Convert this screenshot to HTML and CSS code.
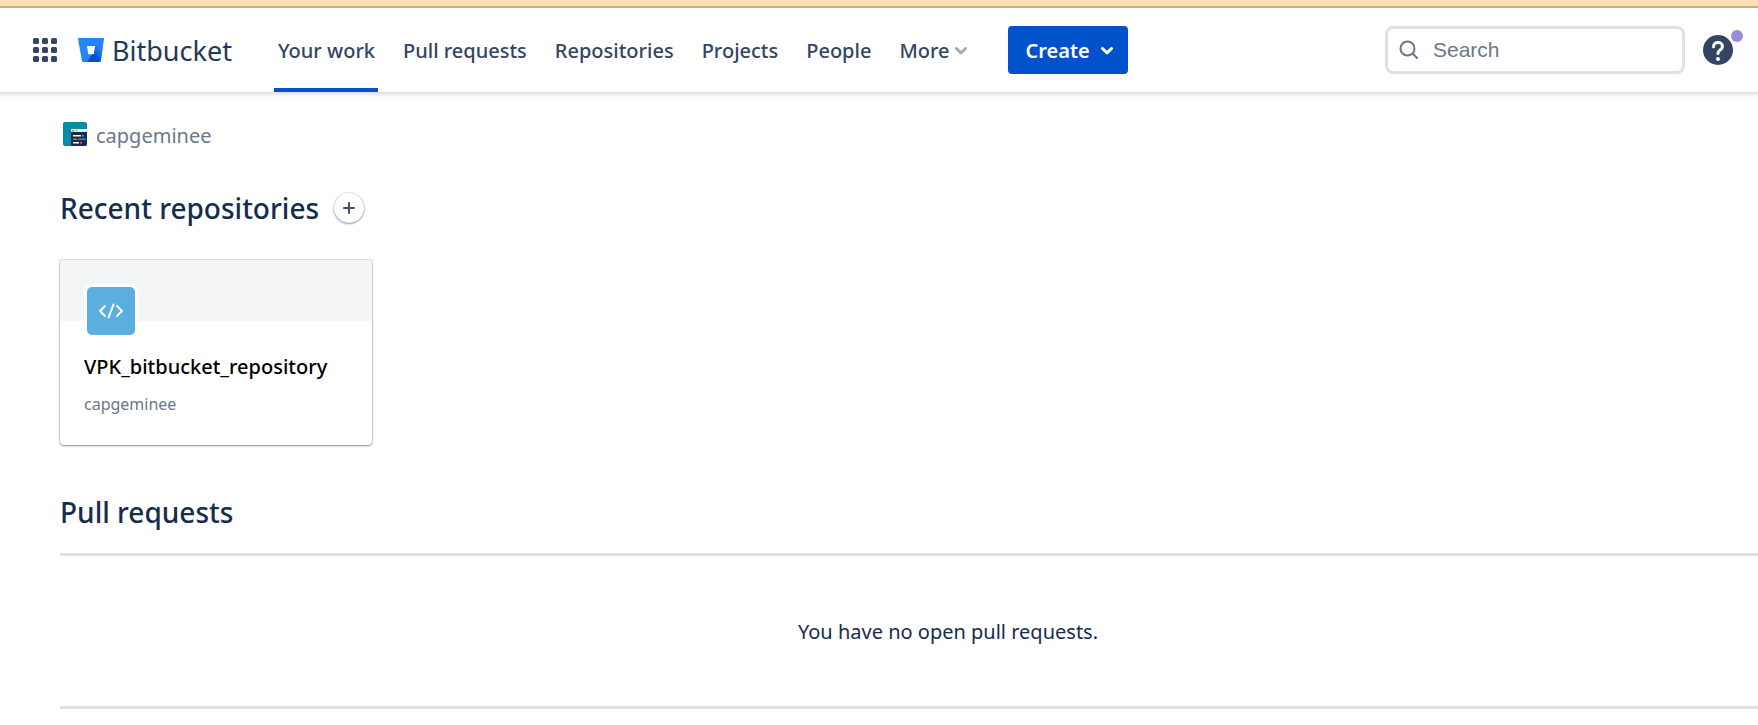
FILE: index.html
```html
<!DOCTYPE html>
<html lang="en">
<head>
<meta charset="utf-8">
<meta name="viewport" content="width=device-width, initial-scale=1">
<title>Your work – Bitbucket</title>
<link rel="stylesheet" href="styles.css">
</head>
<body>
<div class="notice-strip"></div>
<header class="topbar">
  <button class="icon-button switcher" type="button" aria-label="Switch to another product">
    <svg width="24" height="24" viewBox="0 0 24 24" fill="#344563">
      <rect x="0" y="0" width="6" height="6" rx="1.5"/><rect x="9" y="0" width="6" height="6" rx="1.5"/><rect x="18" y="0" width="6" height="6" rx="1.5"/>
      <rect x="0" y="9" width="6" height="6" rx="1.5"/><rect x="9" y="9" width="6" height="6" rx="1.5"/><rect x="18" y="9" width="6" height="6" rx="1.5"/>
      <rect x="0" y="18" width="6" height="6" rx="1.5"/><rect x="9" y="18" width="6" height="6" rx="1.5"/><rect x="18" y="18" width="6" height="6" rx="1.5"/>
    </svg>
  </button>
  <a class="brand" href="#">
    <svg width="26" height="24" viewBox="0 0 26 24" aria-hidden="true">
      <defs>
        <linearGradient id="bucket-shade" x1="25" y1="9" x2="15" y2="17" gradientUnits="userSpaceOnUse">
          <stop offset="0.15" stop-color="#2684ff"/><stop offset="1" stop-color="#0052cc"/>
        </linearGradient>
      </defs>
      <path fill="#2684ff" fill-rule="evenodd" d="M0.8 0H25.2a.8.8 0 0 1 .8.900L22.700 23.200a1 1 0 0 1-1 .8H5a1 1 0 0 1-1-.8L0 .9A.8.8 0 0 1 .8 0ZM9 8l1.300 8.300h5.700L17.200 8Z"/>
      <path fill="url(#bucket-shade)" d="M24.900 8H17.200L16 16.300h-2L9 23.900H21.700a1 1 0 0 0 1-.8Z"/>
    </svg>
    <span>Bitbucket</span>
  </a>
  <nav class="nav" aria-label="Primary">
    <a class="nav-item nav-item-active" href="#" aria-current="page">Your work</a>
    <a class="nav-item" href="#">Pull requests</a>
    <a class="nav-item" href="#">Repositories</a>
    <a class="nav-item" href="#">Projects</a>
    <a class="nav-item" href="#">People</a>
    <button class="nav-item" type="button">More
      <svg width="12" height="8" viewBox="0 0 12 8" fill="none" stroke="#a5adba" stroke-width="3" stroke-linecap="round" stroke-linejoin="round" aria-hidden="true"><path d="M1.500 1.500 6 5.800l4.500-4.300"/></svg>
    </button>
  </nav>
  <button class="create" type="button">Create
    <svg width="12" height="8" viewBox="0 0 12 8" fill="none" stroke="#fff" stroke-width="3" stroke-linecap="round" stroke-linejoin="round" aria-hidden="true"><path d="M1.500 1.500 6 5.800l4.500-4.300"/></svg>
  </button>
  <label class="search">
    <svg width="20" height="20" viewBox="0 0 20 20" fill="none" stroke="#6b778c" stroke-width="2" stroke-linecap="round" aria-hidden="true"><circle cx="8.500" cy="8.500" r="7"/><path d="m13.800 13.800 4.200 4.200"/></svg>
    <input type="search" placeholder="Search" aria-label="Search">
  </label>
  <button class="icon-button help" type="button" aria-label="Help">
    <svg width="30" height="30" viewBox="0 0 30 30">
      <circle cx="15" cy="15" r="15" fill="#344563"/>
      <path d="M10.500 11.800C10.500 9 12.400 7.500 15 7.500s4.500 1.600 4.500 4c0 3.300-4.500 3.300-4.500 7" fill="none" stroke="#fff" stroke-width="3" stroke-linecap="round"/>
      <circle cx="15" cy="24" r="2" fill="#fff"/>
    </svg>
    <span class="help-dot"></span>
  </button>
</header>
<main class="page">
  <a class="workspace" href="#">
    <svg width="24" height="24" viewBox="0 0 24 24" aria-hidden="true">
      <clipPath id="tile"><rect width="24" height="24" rx="2"/></clipPath>
      <g clip-path="url(#tile)">
        <rect width="24" height="24" fill="#008da6"/>
        <path fill="#172b4d" d="M8 8h16v16H8z"/>
        <path fill="#ebecf0" d="M8 7h16v3H8z"/>
        <path fill="#ff5630" d="M9 8h1.500v1.500H9z"/><path fill="#ffc400" d="M11 8h1.500v1.500H11z"/><path fill="#57d9a3" d="M13 8h1.500v1.500H13z"/>
        <path fill="#fff" d="M10 13h8v1.500h-8zM10 20h6v1.500h-6z"/>
        <path fill="#4c9aff" d="M19 13h2v1.500h-2z"/>
        <path fill="#ff5630" d="M10 16.500h4v1.500h-4zM17 20h2v1.500h-2z"/>
        <path fill="#00a3bf" d="M15 16.500h8v1.500h-8z"/>
      </g>
    </svg>
    <span>capgeminee</span>
  </a>
  <section class="recent">
    <div class="recent-head">
      <h2>Recent repositories</h2>
      <button class="add" type="button" aria-label="Create repository">
        <svg width="12" height="12" viewBox="0 0 12 12" stroke="#42526e" stroke-width="2" stroke-linecap="round"><path d="M6 1v10M1 6h10"/></svg>
      </button>
    </div>
    <a class="card" href="#">
      <span class="card-band"></span>
      <span class="card-body">
        <span class="avatar">
          <svg width="26" height="16" viewBox="0 0 26 16" fill="none" stroke="#fff" stroke-width="2" stroke-linecap="round" stroke-linejoin="round" aria-hidden="true"><path d="M7 3 2 8l5 5M19 3l5 5-5 5M15.500 1.500l-5 13"/></svg>
        </span>
        <span class="card-title">VPK_bitbucket_repository</span>
        <span class="card-owner">capgeminee</span>
      </span>
    </a>
  </section>
  <section class="pulls">
    <h2>Pull requests</h2>
    <p class="empty">You have no open pull requests.</p>
  </section>
</main>
</body>
</html>
```
FILE: styles.css
```css
* {
  box-sizing: border-box;
}

body {
  margin: 0;
  background: #fff;
  color: #172b4d;
  font-family: "Segoe UI", "Noto Sans", "Open Sans", sans-serif;
  font-size: 20px;
  line-height: 28px;
}

a {
  color: inherit;
  text-decoration: none;
}

button {
  border: 0;
  padding: 0;
  background: none;
  color: inherit;
  font: inherit;
  cursor: pointer;
}

svg {
  display: block;
  flex: none;
}

h2 {
  margin: 0;
  font-size: 28px;
  line-height: 36px;
  font-weight: 500;
}

.notice-strip {
  height: 8px;
  background: #ffdeb5;
  border-bottom: 2px solid #c8b38f;
}

.topbar {
  display: flex;
  align-items: center;
  height: 84px;
  padding: 0 25px 0 33px;
  box-shadow: 0 1px 0 #dfe1e6, 0 2px 3px 1px rgba(9, 30, 66, 0.12);
}

.icon-button {
  position: relative;
  flex: none;
}

.brand {
  display: flex;
  align-items: center;
  gap: 8px;
  margin: 0 42px 0 21px;
  color: #253858;
  font-size: 27px;
}

.brand span {
  padding-top: 2px;
}

.nav {
  display: flex;
  align-self: stretch;
  gap: 21px;
}

.nav-item {
  display: flex;
  align-items: center;
  gap: 5px;
  padding: 6px 3px 0 4px;
  border-bottom: 4px solid transparent;
  color: #344563;
  font-weight: 500;
  white-space: nowrap;
}

.nav-item-active {
  border-bottom-color: #0052cc;
}

.create {
  display: flex;
  align-items: center;
  justify-content: space-between;
  width: 120px;
  height: 48px;
  margin-left: 38px;
  padding: 2px 15px 0 18px;
  border-radius: 4px;
  background: #0052cc;
  color: #fff;
  font-weight: 600;
}

.search {
  display: flex;
  align-items: center;
  gap: 14px;
  width: 300px;
  height: 48px;
  margin: 0 18px 0 auto;
  padding: 0 11px;
  border: 3px solid #dfe1e6;
  border-radius: 8px;
}

.search input {
  flex: 1;
  min-width: 0;
  border: 0;
  padding: 0;
  outline: 0;
  background: none;
  color: #172b4d;
  font: 21px "Liberation Sans", Arial, sans-serif;
}

.search input::placeholder {
  color: #6b778c;
  opacity: 1;
}

.help-dot {
  position: absolute;
  top: -5px;
  right: -10px;
  width: 12px;
  height: 12px;
  border-radius: 50%;
  background: #998dd9;
}

.page {
  padding: 28px 0 16px 60px;
}

.workspace {
  display: inline-flex;
  align-items: center;
  gap: 9px;
  padding-left: 3px;
  color: #6b778c;
}

.workspace span {
  margin-bottom: -2px;
  padding-top: 2px;
}

.recent-head {
  display: flex;
  align-items: center;
  gap: 15px;
  margin: 37px 0 34px;
}

.add {
  display: grid;
  place-items: center;
  width: 30px;
  height: 30px;
  border-radius: 50%;
  box-shadow: 0 1px 2px rgba(9, 30, 66, 0.4), 0 0 1px 1px rgba(9, 30, 66, 0.12);
}

.card {
  display: block;
  width: 312px;
  border-radius: 4px;
  overflow: hidden;
  box-shadow: 0 1px 2px rgba(9, 30, 66, 0.4), 0 0 1px 1px rgba(9, 30, 66, 0.15);
}

.card-band {
  display: block;
  height: 61px;
  background: #f4f5f7;
}

.card-body {
  display: flex;
  flex-direction: column;
  margin-top: -37px;
  padding: 0 24px 29px;
}

.avatar {
  display: grid;
  place-items: center;
  width: 54px;
  height: 54px;
  border: 3px solid #fff;
  border-radius: 8px;
  background: #5aaee0;
}

.card-title {
  margin-top: 15px;
  color: #000;
  font-weight: 500;
}

.card-owner {
  margin-top: 11px;
  color: #6b778c;
  font-size: 16px;
  line-height: 24px;
}

.pulls {
  margin-top: 49px;
}

.empty {
  margin: 23px 0 0;
  padding: 62px 0 60px 78px;
  border: solid #dfe1e6;
  border-width: 3px 0;
  text-align: center;
}
```
